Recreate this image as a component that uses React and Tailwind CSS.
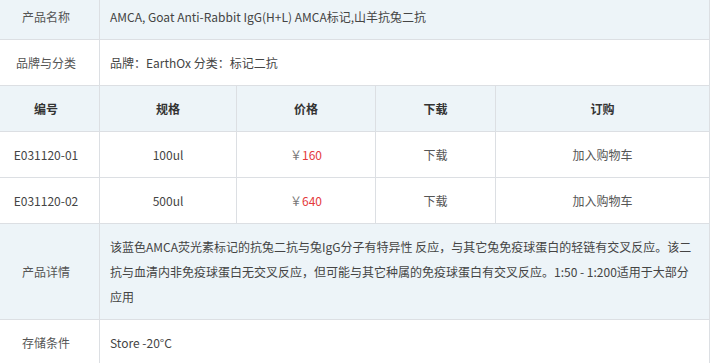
import React from 'react';

const font = { fontFamily: '"Noto Sans CJK SC", "Noto Sans", sans-serif' };

const items = [
  { code: 'E031120-01', size: '100ul', price: '160' },
  { code: 'E031120-02', size: '500ul', price: '640' },
];

const Label = ({ children }) => (
  <div className="w-[107px] shrink-0 border-r border-[#dcdfe3] flex items-center justify-center text-[#555]">
    {children}
  </div>
);

export default function App() {
  return (
    <div className="w-[713px] h-[363px] overflow-hidden bg-white text-[12px]" style={font}>
      {/* table is scrolled a little: left and top edges sit outside the view */}
      <div className="w-[717px] -ml-[7px] -mt-[6px] border-r border-[#dcdfe3]">
        <div className="flex h-[46px] bg-[#edf4f8] border-b border-[#dcdfe3]">
          <Label>产品名称</Label>
          <div className="flex items-center px-[10px] text-[#444]">
            AMCA, Goat Anti-Rabbit IgG(H+L) AMCA标记,山羊抗兔二抗
          </div>
        </div>

        <div className="flex h-[46px] border-b border-[#dcdfe3]">
          <Label>品牌与分类</Label>
          <div className="flex items-center px-[10px] text-[#444]">品牌：EarthOx 分类：标记二抗</div>
        </div>

        <div className="flex h-[46px] bg-[#edf4f8] border-b border-[#dcdfe3] font-bold text-[#333]">
          <div className="w-[107px] border-r border-[#dcdfe3] flex items-center justify-center">编号</div>
          <div className="w-[137px] border-r border-[#dcdfe3] flex items-center justify-center">规格</div>
          <div className="w-[139px] border-r border-[#dcdfe3] flex items-center justify-center">价格</div>
          <div className="w-[120px] border-r border-[#dcdfe3] flex items-center justify-center">下载</div>
          <div className="flex-1 flex items-center justify-center">订购</div>
        </div>

        {items.map((it) => (
          <div key={it.code} className="flex h-[46px] border-b border-[#dcdfe3] text-[#444]">
            <div className="w-[107px] border-r border-[#dcdfe3] flex items-center justify-center">{it.code}</div>
            <div className="w-[137px] border-r border-[#dcdfe3] flex items-center justify-center">{it.size}</div>
            <div className="w-[139px] border-r border-[#dcdfe3] flex items-center justify-center">
              <span className="text-[#777]">￥</span>
              <span className="text-[#e4393c]">{it.price}</span>
            </div>
            <div className="w-[120px] border-r border-[#dcdfe3] flex items-center justify-center text-[#555]">下载</div>
            <div className="flex-1 flex items-center justify-center text-[#555]">加入购物车</div>
          </div>
        ))}

        <div className="flex h-[96px] bg-[#edf4f8] border-b border-[#dcdfe3]">
          <Label>产品详情</Label>
          <div className="flex-1 px-[10px] py-[10px] leading-[25px] text-[#444]">
            该蓝色AMCA荧光素标记的抗兔二抗与兔IgG分子有特异性 反应，与其它兔免疫球蛋白的轻链有交叉反应。该二抗与血清内非免疫球蛋白无交叉反应，但可能与其它种属的免疫球蛋白有交叉反应。1:50 - 1:200适用于大部分应用
          </div>
        </div>

        <div className="flex h-[46px] border-b border-[#dcdfe3]">
          <Label>存储条件</Label>
          <div className="flex items-center px-[10px] text-[#444]">Store -20°C</div>
        </div>
      </div>
    </div>
  );
}
